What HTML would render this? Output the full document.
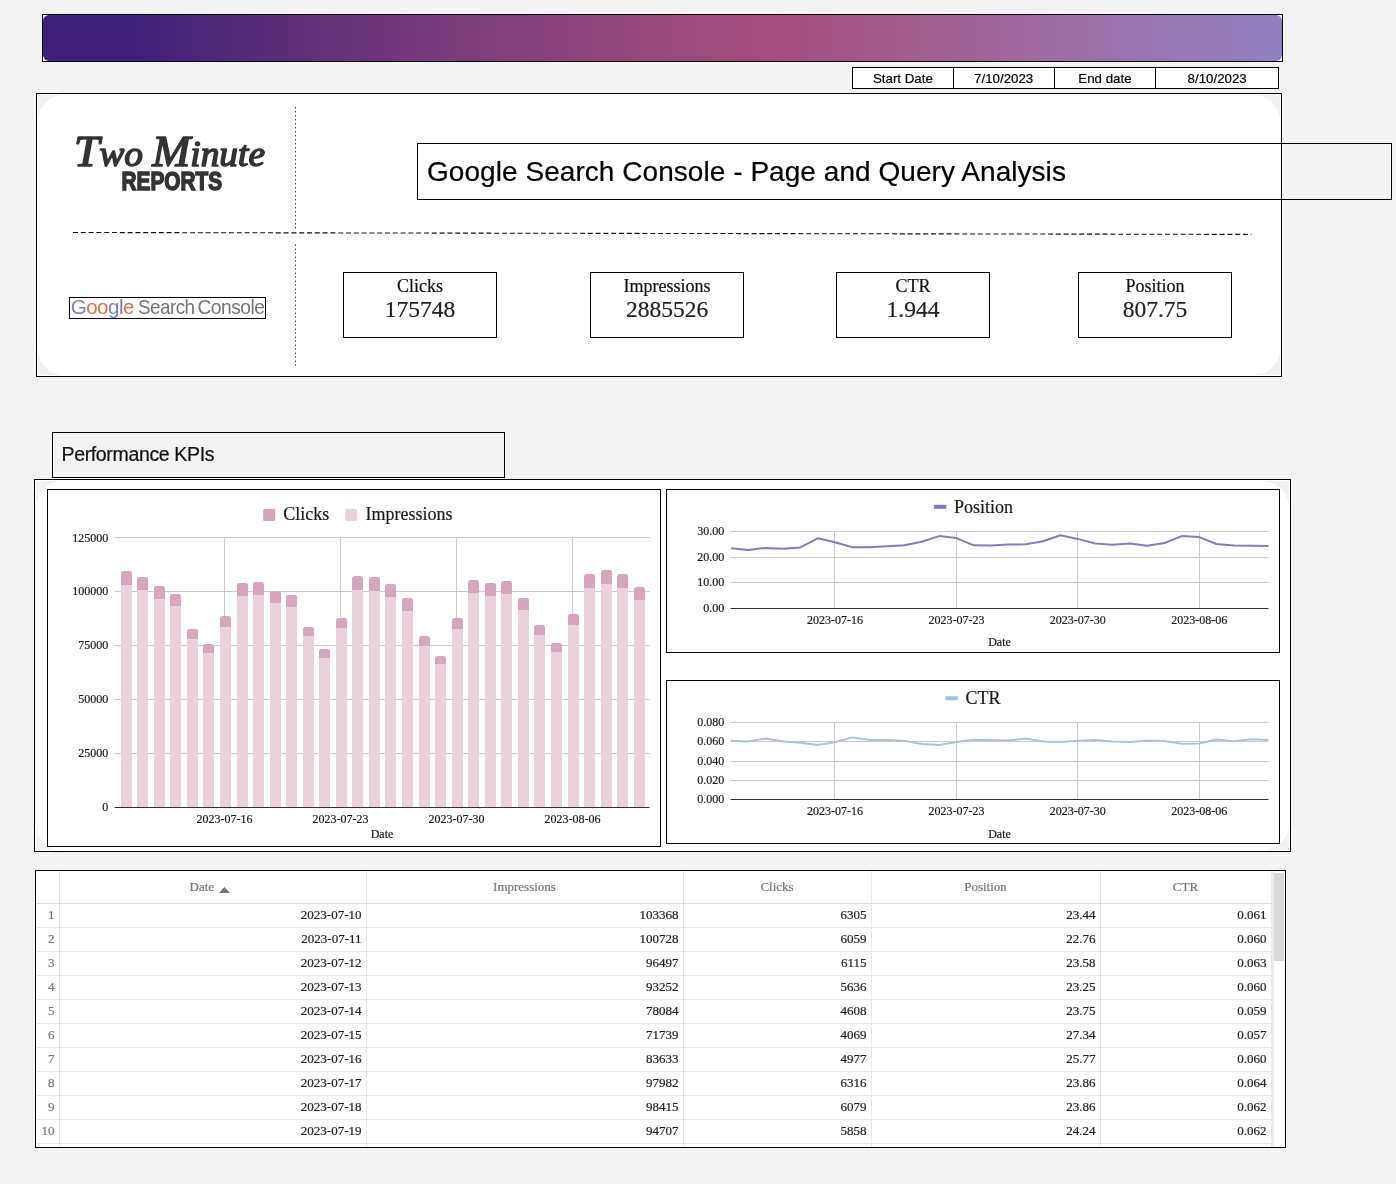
<!DOCTYPE html>
<html><head><meta charset="utf-8"><title>Google Search Console - Page and Query Analysis</title>
<style>
*{box-sizing:border-box;margin:0;padding:0}
html,body{width:1396px;height:1184px;overflow:hidden;background:#f3f3f3}
body{position:relative;will-change:transform;-webkit-text-stroke:0.2px;font-family:"Liberation Serif",serif;color:#222}
.abs{position:absolute}
.bx{position:absolute;border:1px solid #000}
.sans{font-family:"Liberation Sans",sans-serif}
#banner{left:42px;top:14px;width:1241px;height:48px;background:#fff}
#banner i{position:absolute;left:0;top:0;right:0;bottom:0;border-radius:6px;
 background:linear-gradient(90deg,#40217a 0%,#40217a 8%,#5a2d77 19.7%,#763a79 31%,#8a427b 41%,#9a487c 50%,#a64e80 59.5%,#a35b8b 69%,#9f669a 77%,#9b71a8 85%,#967ab5 93.4%,#8f80c4 100%)}
#dates{left:852px;top:67px;width:427px;height:22px;background:#fff;display:flex;font:13.3px/21px "Liberation Sans",sans-serif;color:#000;text-align:center}
#dates span{display:block;width:101px;border-right:1px solid #000;height:20px}
#dates span:nth-child(3){width:102px}
#dates span:last-child{border-right:0;width:122px}
#p1{left:36px;top:93px;width:1246px;height:284px;background:#fff}
#p1 i,#p2 i{position:absolute;inset:1px;background:#f1f1f1}
#p1 u,#p2 u{position:absolute;inset:0;border-radius:26px;background:#fff}
#title{left:417px;top:143px;width:975px;height:57px;font:28px/56px "Liberation Sans",sans-serif;color:#000;padding-left:9px;white-space:nowrap;letter-spacing:0.05px}
.kpi{width:154px;height:66px;top:272px;text-align:center;color:#222}
.kpi b{display:block;color:#111;font-weight:normal;font-size:18px;line-height:20px;margin-top:3px}
.kpi s{display:block;text-decoration:none;font-size:23.5px;line-height:26px;margin-top:0px}
#hd{left:73px;top:232px;width:1179px;height:0;border-top:1px dashed #222}
.vd{left:295px;width:0;border-left:1px dotted #444}
#gsc{left:69px;top:297px;width:197px;height:22px;background:#fff;font:20px/20px "Liberation Sans",sans-serif;white-space:nowrap;letter-spacing:-0.6px;padding-left:1px;color:#757575}
#pk{left:52px;top:432px;width:453px;height:46px;font:19.5px/43px "Liberation Sans",sans-serif;color:#111;padding-left:8.5px;letter-spacing:-0.35px}
#p2{left:34px;top:479px;width:1257px;height:373px;background:#fff}
.ch{background:#fff}
svg{position:absolute;left:0;top:0;display:block}
.ch text{font-family:"Liberation Serif",serif;fill:#1a1a1a;stroke:#1a1a1a;stroke-width:0.2px}
#gsc text{stroke:none;-webkit-text-stroke:0}
.t12{font-size:12px}
.t18{font-size:18px}
#tb{left:35px;top:870px;width:1251px;height:278px;background:#fff;overflow:hidden}
table{border-collapse:collapse;table-layout:fixed;width:1249px;font:13px "Liberation Serif",serif;color:#222}
td,th{border:1px solid #e7e7e7;border-top:0;height:24px;text-align:right;padding:0 4px 0 0;font-weight:normal;vertical-align:middle}
th{height:32px;text-align:center;color:#777;padding:0;border-bottom-color:#ddd}
td.ix{color:#777;border-left:0}
th.ix{border-left:0}
.sb{border:0 !important}
</style></head><body>
<div class="bx" id="banner"><i></i></div>
<div class="bx" id="dates"><span>Start Date</span><span>7/10/2023</span><span>End date</span><span>8/10/2023</span></div>
<div class="bx" id="p1"><i><u></u></i></div>
<svg class="abs" style="left:70px;top:130px" width="210" height="70" viewBox="0 0 210 70">
<text x="4" y="35.5" style="font:italic 36px 'Liberation Serif',serif;fill:#333;stroke:#333;stroke-width:1.5px;stroke-linejoin:round" textLength="191" lengthAdjust="spacingAndGlyphs"><tspan style="font-size:44px">T</tspan>wo <tspan style="font-size:44px">M</tspan>inute</text>
<text x="51.5" y="60.2" style="font:bold 26px 'Liberation Sans',sans-serif;fill:#333;stroke:#333;stroke-width:1.5px;stroke-linejoin:miter" textLength="100.5" lengthAdjust="spacingAndGlyphs">REPORTS</text>
</svg>
<svg class="abs" style="left:0;top:100px" width="1396" height="280" viewBox="0 100 1396 280">
<line x1="295.5" x2="295.5" y1="107" y2="228.5" stroke="#333" stroke-width="1" stroke-dasharray="1.4 2.6"/>
<line x1="295.5" x2="295.5" y1="244.5" y2="366" stroke="#333" stroke-width="1" stroke-dasharray="1.4 2.6"/>
<line x1="73" x2="1251.4" y1="232.5" y2="234.4" stroke="#111" stroke-width="1.1" stroke-dasharray="5 2.8"/>
</svg>
<div class="bx" id="title">Google Search Console - Page and Query Analysis</div>
<div class="bx" id="gsc"><svg width="196" height="20" viewBox="0 0 196 20"><text x="0.8" y="15.7" textLength="63" lengthAdjust="spacingAndGlyphs" style="font:21px 'Liberation Sans',sans-serif"><tspan style="fill:#7b7fd6">G</tspan><tspan style="fill:#e2703a">oo</tspan><tspan style="fill:#7b7fd6">g</tspan><tspan style="fill:#8a6fc0">l</tspan><tspan style="fill:#e2703a">e</tspan></text><text x="68" y="15.7" textLength="56.5" lengthAdjust="spacingAndGlyphs" style="font:21px 'Liberation Sans',sans-serif;fill:#757575">Search</text><text x="127.5" y="15.7" textLength="66.8" lengthAdjust="spacingAndGlyphs" style="font:21px 'Liberation Sans',sans-serif;fill:#757575">Console</text></svg></div>
<div class="bx kpi" style="left:343px"><b>Clicks</b><s>175748</s></div>
<div class="bx kpi" style="left:590px"><b>Impressions</b><s>2885526</s></div>
<div class="bx kpi" style="left:836px"><b>CTR</b><s>1.944</s></div>
<div class="bx kpi" style="left:1078px"><b>Position</b><s>807.75</s></div>

<div class="bx sans" id="pk">Performance KPIs</div>
<div class="bx" id="p2"><i><u></u></i></div>
<div class="bx ch" style="left:47px;top:489px;width:614px;height:358px"><svg width="612" height="356">
<line x1="66.5" x2="601.5" y1="263.5" y2="263.5" stroke="#ccc" stroke-width="1"/>
<line x1="66.5" x2="601.5" y1="209.5" y2="209.5" stroke="#ccc" stroke-width="1"/>
<line x1="66.5" x2="601.5" y1="155.5" y2="155.5" stroke="#ccc" stroke-width="1"/>
<line x1="66.5" x2="601.5" y1="101.5" y2="101.5" stroke="#ccc" stroke-width="1"/>
<line x1="66.5" x2="601.5" y1="47.5" y2="47.5" stroke="#ccc" stroke-width="1"/>
<line x1="176.5" x2="176.5" y1="47" y2="317" stroke="#ccc" stroke-width="1"/>
<line x1="292.5" x2="292.5" y1="47" y2="317" stroke="#ccc" stroke-width="1"/>
<line x1="408.5" x2="408.5" y1="47" y2="317" stroke="#ccc" stroke-width="1"/>
<line x1="524.5" x2="524.5" y1="47" y2="317" stroke="#ccc" stroke-width="1"/>
<rect x="73" y="95.0" width="11" height="222.4" fill="#ead1dc"/>
<path d="M73 95.0V83.5q0 -2.5 2.5 -2.5h6q2.5 0 2.5 2.5V95.0z" fill="#d5a6bd"/>
<rect x="89" y="100.0" width="11" height="217.4" fill="#ead1dc"/>
<path d="M89 100.0V89.5q0 -2.5 2.5 -2.5h6q2.5 0 2.5 2.5V100.0z" fill="#d5a6bd"/>
<rect x="106" y="109.0" width="11" height="208.4" fill="#ead1dc"/>
<path d="M106 109.0V98.5q0 -2.5 2.5 -2.5h6q2.5 0 2.5 2.5V109.0z" fill="#d5a6bd"/>
<rect x="122" y="116.0" width="11" height="201.4" fill="#ead1dc"/>
<path d="M122 116.0V106.5q0 -2.5 2.5 -2.5h6q2.5 0 2.5 2.5V116.0z" fill="#d5a6bd"/>
<rect x="139" y="149.0" width="11" height="168.4" fill="#ead1dc"/>
<path d="M139 149.0V141.5q0 -2.5 2.5 -2.5h6q2.5 0 2.5 2.5V149.0z" fill="#d5a6bd"/>
<rect x="155" y="163.0" width="11" height="154.4" fill="#ead1dc"/>
<path d="M155 163.0V156.5q0 -2.5 2.5 -2.5h6q2.5 0 2.5 2.5V163.0z" fill="#d5a6bd"/>
<rect x="172" y="137.0" width="11" height="180.4" fill="#ead1dc"/>
<path d="M172 137.0V128.5q0 -2.5 2.5 -2.5h6q2.5 0 2.5 2.5V137.0z" fill="#d5a6bd"/>
<rect x="189" y="106.0" width="11" height="211.4" fill="#ead1dc"/>
<path d="M189 106.0V95.5q0 -2.5 2.5 -2.5h6q2.5 0 2.5 2.5V106.0z" fill="#d5a6bd"/>
<rect x="205" y="105.0" width="11" height="212.4" fill="#ead1dc"/>
<path d="M205 105.0V94.5q0 -2.5 2.5 -2.5h6q2.5 0 2.5 2.5V105.0z" fill="#d5a6bd"/>
<rect x="222" y="113.0" width="11" height="204.4" fill="#ead1dc"/>
<path d="M222 113.0V103.5q0 -2.5 2.5 -2.5h6q2.5 0 2.5 2.5V113.0z" fill="#d5a6bd"/>
<rect x="238" y="117.0" width="11" height="200.4" fill="#ead1dc"/>
<path d="M238 117.0V107.5q0 -2.5 2.5 -2.5h6q2.5 0 2.5 2.5V117.0z" fill="#d5a6bd"/>
<rect x="255" y="146.0" width="11" height="171.4" fill="#ead1dc"/>
<path d="M255 146.0V139.5q0 -2.5 2.5 -2.5h6q2.5 0 2.5 2.5V146.0z" fill="#d5a6bd"/>
<rect x="271" y="168.0" width="11" height="149.4" fill="#ead1dc"/>
<path d="M271 168.0V161.5q0 -2.5 2.5 -2.5h6q2.5 0 2.5 2.5V168.0z" fill="#d5a6bd"/>
<rect x="288" y="138.0" width="11" height="179.4" fill="#ead1dc"/>
<path d="M288 138.0V130.5q0 -2.5 2.5 -2.5h6q2.5 0 2.5 2.5V138.0z" fill="#d5a6bd"/>
<rect x="304" y="100.0" width="11" height="217.4" fill="#ead1dc"/>
<path d="M304 100.0V88.5q0 -2.5 2.5 -2.5h6q2.5 0 2.5 2.5V100.0z" fill="#d5a6bd"/>
<rect x="321" y="101.0" width="11" height="216.4" fill="#ead1dc"/>
<path d="M321 101.0V89.5q0 -2.5 2.5 -2.5h6q2.5 0 2.5 2.5V101.0z" fill="#d5a6bd"/>
<rect x="337" y="107.0" width="11" height="210.4" fill="#ead1dc"/>
<path d="M337 107.0V96.5q0 -2.5 2.5 -2.5h6q2.5 0 2.5 2.5V107.0z" fill="#d5a6bd"/>
<rect x="354" y="121.0" width="11" height="196.4" fill="#ead1dc"/>
<path d="M354 121.0V110.5q0 -2.5 2.5 -2.5h6q2.5 0 2.5 2.5V121.0z" fill="#d5a6bd"/>
<rect x="371" y="156.0" width="11" height="161.4" fill="#ead1dc"/>
<path d="M371 156.0V148.5q0 -2.5 2.5 -2.5h6q2.5 0 2.5 2.5V156.0z" fill="#d5a6bd"/>
<rect x="387" y="174.0" width="11" height="143.4" fill="#ead1dc"/>
<path d="M387 174.0V168.5q0 -2.5 2.5 -2.5h6q2.5 0 2.5 2.5V174.0z" fill="#d5a6bd"/>
<rect x="404" y="139.0" width="11" height="178.4" fill="#ead1dc"/>
<path d="M404 139.0V130.5q0 -2.5 2.5 -2.5h6q2.5 0 2.5 2.5V139.0z" fill="#d5a6bd"/>
<rect x="420" y="103.0" width="11" height="214.4" fill="#ead1dc"/>
<path d="M420 103.0V92.5q0 -2.5 2.5 -2.5h6q2.5 0 2.5 2.5V103.0z" fill="#d5a6bd"/>
<rect x="437" y="106.0" width="11" height="211.4" fill="#ead1dc"/>
<path d="M437 106.0V95.5q0 -2.5 2.5 -2.5h6q2.5 0 2.5 2.5V106.0z" fill="#d5a6bd"/>
<rect x="453" y="104.0" width="11" height="213.4" fill="#ead1dc"/>
<path d="M453 104.0V93.5q0 -2.5 2.5 -2.5h6q2.5 0 2.5 2.5V104.0z" fill="#d5a6bd"/>
<rect x="470" y="120.0" width="11" height="197.4" fill="#ead1dc"/>
<path d="M470 120.0V110.5q0 -2.5 2.5 -2.5h6q2.5 0 2.5 2.5V120.0z" fill="#d5a6bd"/>
<rect x="486" y="145.0" width="11" height="172.4" fill="#ead1dc"/>
<path d="M486 145.0V137.5q0 -2.5 2.5 -2.5h6q2.5 0 2.5 2.5V145.0z" fill="#d5a6bd"/>
<rect x="503" y="162.0" width="11" height="155.4" fill="#ead1dc"/>
<path d="M503 162.0V155.5q0 -2.5 2.5 -2.5h6q2.5 0 2.5 2.5V162.0z" fill="#d5a6bd"/>
<rect x="520" y="135.0" width="11" height="182.4" fill="#ead1dc"/>
<path d="M520 135.0V126.5q0 -2.5 2.5 -2.5h6q2.5 0 2.5 2.5V135.0z" fill="#d5a6bd"/>
<rect x="536" y="98.0" width="11" height="219.4" fill="#ead1dc"/>
<path d="M536 98.0V86.5q0 -2.5 2.5 -2.5h6q2.5 0 2.5 2.5V98.0z" fill="#d5a6bd"/>
<rect x="553" y="94.0" width="11" height="223.4" fill="#ead1dc"/>
<path d="M553 94.0V82.5q0 -2.5 2.5 -2.5h6q2.5 0 2.5 2.5V94.0z" fill="#d5a6bd"/>
<rect x="569" y="98.0" width="11" height="219.4" fill="#ead1dc"/>
<path d="M569 98.0V86.5q0 -2.5 2.5 -2.5h6q2.5 0 2.5 2.5V98.0z" fill="#d5a6bd"/>
<rect x="586" y="110.0" width="11" height="207.4" fill="#ead1dc"/>
<path d="M586 110.0V99.5q0 -2.5 2.5 -2.5h6q2.5 0 2.5 2.5V110.0z" fill="#d5a6bd"/>
<line x1="66.5" x2="601.5" y1="317.5" y2="317.5" stroke="#333" stroke-width="1"/>
<text x="60.3" y="320.5" text-anchor="end" class="t12">0</text>
<text x="60.3" y="267.0" text-anchor="end" class="t12">25000</text>
<text x="60.3" y="213.0" text-anchor="end" class="t12">50000</text>
<text x="60.3" y="159.0" text-anchor="end" class="t12">75000</text>
<text x="60.3" y="105.0" text-anchor="end" class="t12">100000</text>
<text x="60.3" y="52.0" text-anchor="end" class="t12">125000</text>
<text x="176.5" y="333" text-anchor="middle" class="t12">2023-07-16</text>
<text x="292.5" y="333" text-anchor="middle" class="t12">2023-07-23</text>
<text x="408.5" y="333" text-anchor="middle" class="t12">2023-07-30</text>
<text x="524.5" y="333" text-anchor="middle" class="t12">2023-08-06</text>
<text x="334" y="347.5" text-anchor="middle" class="t12">Date</text>
<rect x="215.2" y="18.899999999999977" width="12" height="12" rx="1" fill="#d5a6bd"/>
<text x="235.3" y="30.399999999999977" class="t18">Clicks</text>
<rect x="297.2" y="18.899999999999977" width="12" height="12" rx="1" fill="#ead1dc"/>
<text x="317.5" y="30.399999999999977" class="t18">Impressions</text>
</svg></div>
<div class="bx ch" style="left:666px;top:489px;width:614px;height:164px"><svg width="612" height="162">
<line x1="63.5" x2="601.5" y1="92.5" y2="92.5" stroke="#ccc" stroke-width="1"/>
<line x1="63.5" x2="601.5" y1="67.5" y2="67.5" stroke="#ccc" stroke-width="1"/>
<line x1="63.5" x2="601.5" y1="41.5" y2="41.5" stroke="#ccc" stroke-width="1"/>
<line x1="167.5" x2="167.5" y1="41.0" y2="118.0" stroke="#ccc" stroke-width="1"/>
<line x1="289.5" x2="289.5" y1="41.0" y2="118.0" stroke="#ccc" stroke-width="1"/>
<line x1="410.5" x2="410.5" y1="41.0" y2="118.0" stroke="#ccc" stroke-width="1"/>
<line x1="532.5" x2="532.5" y1="41.0" y2="118.0" stroke="#ccc" stroke-width="1"/>
<polyline points="64.0,58.2 81.3,60.0 98.7,57.9 116.0,58.7 133.4,57.4 150.7,48.3 168.0,52.3 185.4,57.2 202.7,57.2 220.1,56.2 237.4,55.3 254.7,51.7 272.1,46.1 289.4,48.1 306.8,55.3 324.1,55.5 341.4,54.6 358.8,54.2 376.1,51.3 393.5,45.3 410.8,48.9 428.1,53.5 445.5,54.8 462.8,53.5 480.2,55.8 497.5,53.0 514.8,46.1 532.2,47.1 549.5,54.0 566.9,55.5 584.2,55.8 601.5,56.0" fill="none" stroke="#837ace" stroke-width="2" stroke-linejoin="round"/>
<line x1="63.5" x2="601.5" y1="118.5" y2="118.5" stroke="#333" stroke-width="1"/>
<text x="57.2" y="121.6" text-anchor="end" class="t12">0.00</text>
<text x="57.2" y="95.9" text-anchor="end" class="t12">10.00</text>
<text x="57.2" y="70.7" text-anchor="end" class="t12">20.00</text>
<text x="57.2" y="45.0" text-anchor="end" class="t12">30.00</text>
<text x="168.0" y="134.0" text-anchor="middle" class="t12">2023-07-16</text>
<text x="289.4" y="134.0" text-anchor="middle" class="t12">2023-07-23</text>
<text x="410.8" y="134.0" text-anchor="middle" class="t12">2023-07-30</text>
<text x="532.2" y="134.0" text-anchor="middle" class="t12">2023-08-06</text>
<text x="332.5" y="156.0" text-anchor="middle" class="t12">Date</text>
<rect x="266.9" y="14.8" width="12.4" height="4" fill="#837ace"/>
<text x="287.1" y="22.8" class="t18">Position</text>
</svg></div>
<div class="bx ch" style="left:666px;top:680px;width:614px;height:164px"><svg width="612" height="162">
<line x1="63.5" x2="601.5" y1="99.5" y2="99.5" stroke="#ccc" stroke-width="1"/>
<line x1="63.5" x2="601.5" y1="80.5" y2="80.5" stroke="#ccc" stroke-width="1"/>
<line x1="63.5" x2="601.5" y1="60.5" y2="60.5" stroke="#ccc" stroke-width="1"/>
<line x1="63.5" x2="601.5" y1="41.5" y2="41.5" stroke="#ccc" stroke-width="1"/>
<line x1="167.5" x2="167.5" y1="41.0" y2="118.5" stroke="#ccc" stroke-width="1"/>
<line x1="289.5" x2="289.5" y1="41.0" y2="118.5" stroke="#ccc" stroke-width="1"/>
<line x1="410.5" x2="410.5" y1="41.0" y2="118.5" stroke="#ccc" stroke-width="1"/>
<line x1="532.5" x2="532.5" y1="41.0" y2="118.5" stroke="#ccc" stroke-width="1"/>
<polyline points="64.0,59.8 81.3,60.6 98.7,57.5 116.0,60.4 133.4,61.7 150.7,63.9 168.0,61.2 185.4,56.4 202.7,59.0 220.1,58.9 237.4,59.8 254.7,63.0 272.1,63.9 289.4,61.1 306.8,58.8 324.1,59.1 341.4,59.6 358.8,57.4 376.1,60.6 393.5,61.1 410.8,59.8 428.1,58.9 445.5,60.6 462.8,61.1 480.2,59.6 497.5,60.0 514.8,62.7 532.2,62.4 549.5,58.5 566.9,60.2 584.2,58.3 601.5,58.9" fill="none" stroke="#9fc5e8" stroke-width="2" stroke-linejoin="round"/>
<line x1="63.5" x2="601.5" y1="118.5" y2="118.5" stroke="#333" stroke-width="1"/>
<text x="57.2" y="121.9" text-anchor="end" class="t12">0.000</text>
<text x="57.2" y="103.1" text-anchor="end" class="t12">0.020</text>
<text x="57.2" y="83.9" text-anchor="end" class="t12">0.040</text>
<text x="57.2" y="64.0" text-anchor="end" class="t12">0.060</text>
<text x="57.2" y="44.9" text-anchor="end" class="t12">0.080</text>
<text x="168.0" y="134.1" text-anchor="middle" class="t12">2023-07-16</text>
<text x="289.4" y="134.1" text-anchor="middle" class="t12">2023-07-23</text>
<text x="410.8" y="134.1" text-anchor="middle" class="t12">2023-07-30</text>
<text x="532.2" y="134.1" text-anchor="middle" class="t12">2023-08-06</text>
<text x="332.5" y="156.5" text-anchor="middle" class="t12">Date</text>
<rect x="278.4" y="15.2" width="12.4" height="4" fill="#9fc5e8"/>
<text x="298.6" y="23.0" class="t18">CTR</text>
</svg></div>

<div class="bx" id="tb"><table>
<colgroup><col style="width:23px"><col style="width:307px"><col style="width:317px"><col style="width:188px"><col style="width:229px"><col style="width:171px"><col style="width:14px"></colgroup>
<tr><th class="ix"></th><th style="padding-right:5px">Date <svg style="position:static;display:inline-block;vertical-align:-2px;margin-left:2px" width="11" height="6" viewBox="0 0 11 6"><path d="M0 6L5.5 0L11 6z" fill="#777"/></svg></th><th>Impressions</th><th>Clicks</th><th>Position</th><th>CTR</th><th class="sb"></th></tr>
<tr><td class="ix">1</td><td>2023-07-10</td><td>103368</td><td>6305</td><td>23.44</td><td>0.061</td><td class="sb"></td></tr>
<tr><td class="ix">2</td><td>2023-07-11</td><td>100728</td><td>6059</td><td>22.76</td><td>0.060</td><td class="sb"></td></tr>
<tr><td class="ix">3</td><td>2023-07-12</td><td>96497</td><td>6115</td><td>23.58</td><td>0.063</td><td class="sb"></td></tr>
<tr><td class="ix">4</td><td>2023-07-13</td><td>93252</td><td>5636</td><td>23.25</td><td>0.060</td><td class="sb"></td></tr>
<tr><td class="ix">5</td><td>2023-07-14</td><td>78084</td><td>4608</td><td>23.75</td><td>0.059</td><td class="sb"></td></tr>
<tr><td class="ix">6</td><td>2023-07-15</td><td>71739</td><td>4069</td><td>27.34</td><td>0.057</td><td class="sb"></td></tr>
<tr><td class="ix">7</td><td>2023-07-16</td><td>83633</td><td>4977</td><td>25.77</td><td>0.060</td><td class="sb"></td></tr>
<tr><td class="ix">8</td><td>2023-07-17</td><td>97982</td><td>6316</td><td>23.86</td><td>0.064</td><td class="sb"></td></tr>
<tr><td class="ix">9</td><td>2023-07-18</td><td>98415</td><td>6079</td><td>23.86</td><td>0.062</td><td class="sb"></td></tr>
<tr><td class="ix">10</td><td>2023-07-19</td><td>94707</td><td>5858</td><td>24.24</td><td>0.062</td><td class="sb"></td></tr>
<tr><td class="ix"></td><td></td><td></td><td></td><td></td><td></td><td class="sb"></td></tr>
</table>
<div class="abs" style="left:1236px;top:0;width:2px;height:276px;background:#ececec"></div>
<div class="abs" style="left:1238px;top:2px;width:10px;height:88px;background:#d9d9d9"></div>
</div>
</body></html>
